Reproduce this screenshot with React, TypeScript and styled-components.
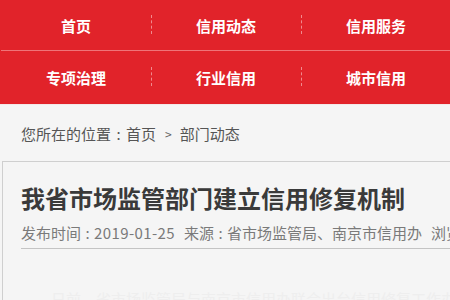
import React from "react";
import styled, { createGlobalStyle } from "styled-components";

const Global = createGlobalStyle`
  html, body { margin: 0; padding: 0; background: #f5f5f5; overflow: hidden; }
  body { font-family: "Microsoft YaHei", "Noto Sans CJK SC", "Noto Sans", sans-serif; }
  #root { width: 450px; height: 300px; overflow: hidden; }
`;

const Page = styled.div`
  width: 450px;
  height: 300px;
  overflow: hidden;
  background: #f5f5f5;
`;

const Nav = styled.nav`
  width: 450px;
  background: #e1232a;
  display: flex;
  flex-direction: column;
  padding-bottom: 1px;
  border-bottom: 1px solid #f3e8e8;
`;

const NavRow = styled.div<{ $h: number; $line?: boolean }>`
  display: grid;
  grid-template-columns: repeat(3, 150px);
  height: ${(p) => p.$h}px;
  margin-left: 1px;
  border-bottom: ${(p) => (p.$line ? "1px solid #ef7478" : "none")};
`;

const NavItem = styled.a<{ $div?: boolean }>`
  position: relative;
  display: flex;
  align-items: center;
  justify-content: center;
  color: #fff;
  font-size: 15px;
  font-weight: bold;
  text-decoration: none;
  &::before {
    content: "";
    display: ${(p) => (p.$div ? "block" : "none")};
    position: absolute;
    left: 0;
    top: 50%;
    height: 19px;
    margin-top: -10px;
    border-left: 1px dashed #f08a8d;
  }
`;

const Crumbs = styled.div`
  height: 56px;
  display: flex;
  align-items: center;
  padding-left: 21px;
  font-size: 15px;
  color: #555;
  white-space: nowrap;
`;

const Colon = styled.span<{ $w?: number }>`
  display: inline-block;
  width: ${(p) => p.$w ?? 15}px;
  text-align: center;
`;

const Sep = styled.span`
  font-size: 12px;
  margin: 0 8px 0 9px;
  color: #666;
`;

const Article = styled.article`
  margin-left: 2px;
  width: 480px;
  border-top: 1px solid #cfcfcf;
  border-left: 1px solid #cfcfcf;
  padding: 18px 0 0 18px;
  background: #f5f5f5;
`;

const Title = styled.h1`
  margin: 0;
  font-size: 24px;
  line-height: 36px;
  font-weight: bold;
  color: #3a3a3a;
  white-space: nowrap;
`;

const Meta = styled.div`
  margin-top: 6px;
  line-height: 22px;
  padding-bottom: 4px;
  border-bottom: 1px solid #c4c4c4;
  font-size: 15px;
  color: #7a7a7a;
  white-space: nowrap;
  overflow: hidden;
`;

const Num = styled.span`
  letter-spacing: 0.4px;
`;

const Gap = styled.span`
  display: inline-block;
  width: 9px;
`;

const Para = styled.p`
  margin: 40px 0 0;
  padding-left: 10px;
  text-indent: 20px;
  font-size: 15px;
  line-height: 20px;
  color: #eeeeee;
  white-space: nowrap;
`;

const rows = [
  ["首页", "信用动态", "信用服务"],
  ["专项治理", "行业信用", "城市信用"],
];

export default function App() {
  return (
    <Page>
      <Global />
      <Nav>
        {rows.map((r, i) => (
          <NavRow key={i} $h={i === 0 ? 50 : 52} $line={i === 0}>
            {r.map((t, j) => (
              <NavItem key={t} href="#" $div={j > 0}>
                {t}
              </NavItem>
            ))}
          </NavRow>
        ))}
      </Nav>
      <Crumbs>
        您所在的位置<Colon>:</Colon>首页<Sep>&gt;</Sep>部门动态
      </Crumbs>
      <Article>
        <Title>我省市场监管部门建立信用修复机制</Title>
        <Meta>
          发布时间<Colon $w={13}>:</Colon>
          <Num>2019-01-25</Num>
          <Gap />来源<Colon $w={13}>:</Colon>省市场监管局、南京市信用办<Gap />浏览次数
        </Meta>
        <Para>日前，省市场监管局与南京市信用办联合出台信用修复工作办法，进一步完善</Para>
      </Article>
    </Page>
  );
}
